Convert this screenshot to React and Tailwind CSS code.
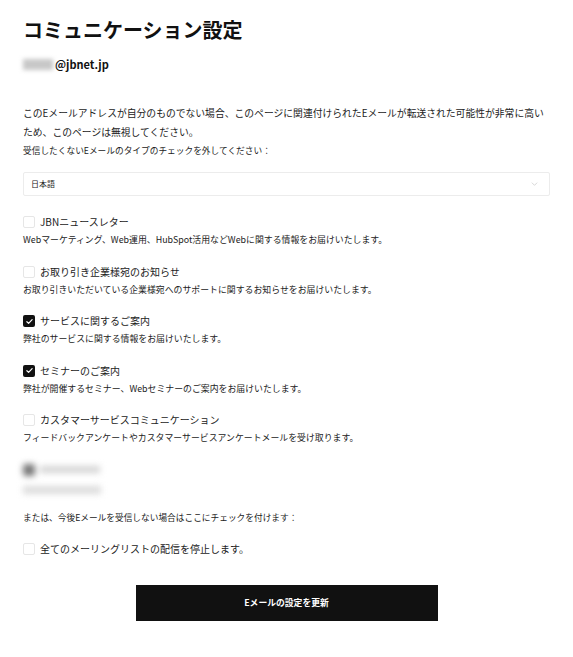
import React, { useState } from 'react';

const topics = [
  {
    id: 'jbn',
    label: 'JBNニュースレター',
    desc: 'Webマーケティング、Web運用、HubSpot活用などWebに関する情報をお届けいたします。',
    checked: false,
  },
  {
    id: 'partner',
    label: 'お取り引き企業様宛のお知らせ',
    desc: 'お取り引きいただいている企業様宛へのサポートに関するお知らせをお届けいたします。',
    checked: false,
  },
  {
    id: 'service',
    label: 'サービスに関するご案内',
    desc: '弊社のサービスに関する情報をお届けいたします。',
    checked: true,
  },
  {
    id: 'seminar',
    label: 'セミナーのご案内',
    desc: '弊社が開催するセミナー、Webセミナーのご案内をお届けいたします。',
    checked: true,
  },
  {
    id: 'cs',
    label: 'カスタマーサービスコミュニケーション',
    desc: 'フィードバックアンケートやカスタマーサービスアンケートメールを受け取ります。',
    checked: false,
  },
];

function Checkbox({ checked, onChange }) {
  return (
    <button
      type="button"
      onClick={onChange}
      className={`w-[12px] h-[12px] rounded-[2px] flex items-center justify-center shrink-0 ${
        checked ? 'bg-[#111]' : 'bg-white border border-[#e6e6e6]'
      }`}
    >
      {checked && (
        <svg viewBox="0 0 12 12" className="w-[9px] h-[9px]" fill="none">
          <path d="M2.5 6.3l2.3 2.2 4.7-5" stroke="white" strokeWidth="1.6" strokeLinecap="round" strokeLinejoin="round" />
        </svg>
      )}
    </button>
  );
}

export default function App() {
  const [state, setState] = useState(() => Object.fromEntries(topics.map((t) => [t.id, t.checked])));
  const [unsubAll, setUnsubAll] = useState(false);

  const toggle = (id) => setState((s) => ({ ...s, [id]: !s[id] }));

  return (
    <div
      className="w-[573px] min-h-[657px] bg-white px-[23px] pt-[16px] text-[#222]"
      style={{ fontFamily: '"Noto Sans CJK JP", "Noto Sans", sans-serif' }}
    >
      <h1 className="text-[20px] leading-[28px] font-bold text-[#111]">コミュニケーション設定</h1>

      <div className="mt-[12px] flex items-center h-[16px]">
        <span className="w-[30px] h-[11px] bg-[#c8c8c8] blur-[2px] mr-[2px]"></span>
        <span className="text-[11px] font-bold text-[#111]">@jbnet.jp</span>
      </div>

      <p className="mt-[32px] text-[9.8px] leading-[19px]">
        このEメールアドレスが自分のものでない場合、このページに関連付けられたEメールが転送された可能性が非常に高い
        <br />
        ため、このページは無視してください。
      </p>
      <p className="text-[8.7px] leading-[18px]">受信したくないEメールのタイプのチェックを外してください：</p>

      <div className="mt-[12px] h-[24px] border border-[#ececec] rounded-[2px] flex items-center justify-between pl-[7px] pr-[11px]">
        <span className="text-[8px]">日本語</span>
        <svg viewBox="0 0 10 6" className="w-[7px] h-[4px]" fill="none">
          <path d="M1 1l4 4 4-4" stroke="#c4c4c4" strokeWidth="1" />
        </svg>
      </div>

      <div className="mt-[18px] flex flex-col gap-[15.5px]">
        {topics.map((t) => (
          <div key={t.id}>
            <label className="flex items-center gap-[5px] h-[16px]">
              <Checkbox checked={state[t.id]} onChange={() => toggle(t.id)} />
              <span className="text-[10px] leading-[16px]">{t.label}</span>
            </label>
            <p className="mt-[2px] text-[8.9px] leading-[16px]">{t.desc}</p>
          </div>
        ))}
        <div className="blur-[3px]" aria-hidden="true">
          <div className="flex items-center gap-[5px] h-[16px]">
            <span className="w-[12px] h-[12px] bg-[#777] rounded-[2px]"></span>
            <span className="w-[60px] h-[7px] bg-[#d4d4d4]"></span>
          </div>
          <div className="mt-[4px] h-[16px] flex items-center">
            <span className="w-[78px] h-[8px] bg-[#dcdcdc]"></span>
          </div>
        </div>
      </div>

      <p className="mt-[12px] text-[8.7px] leading-[16px]">または、今後Eメールを受信しない場合はここにチェックを付けます：</p>

      <label className="mt-[15px] flex items-center gap-[5px] h-[16px]">
        <Checkbox checked={unsubAll} onChange={() => setUnsubAll(!unsubAll)} />
        <span className="text-[10px] leading-[16px]">全てのメーリングリストの配信を停止します。</span>
      </label>

      <div className="mt-[28px] flex justify-center">
        <button
          type="button"
          className="w-[302px] h-[36px] bg-[#111] text-white text-[8.8px] font-bold"
        >
          Eメールの設定を更新
        </button>
      </div>
    </div>
  );
}
